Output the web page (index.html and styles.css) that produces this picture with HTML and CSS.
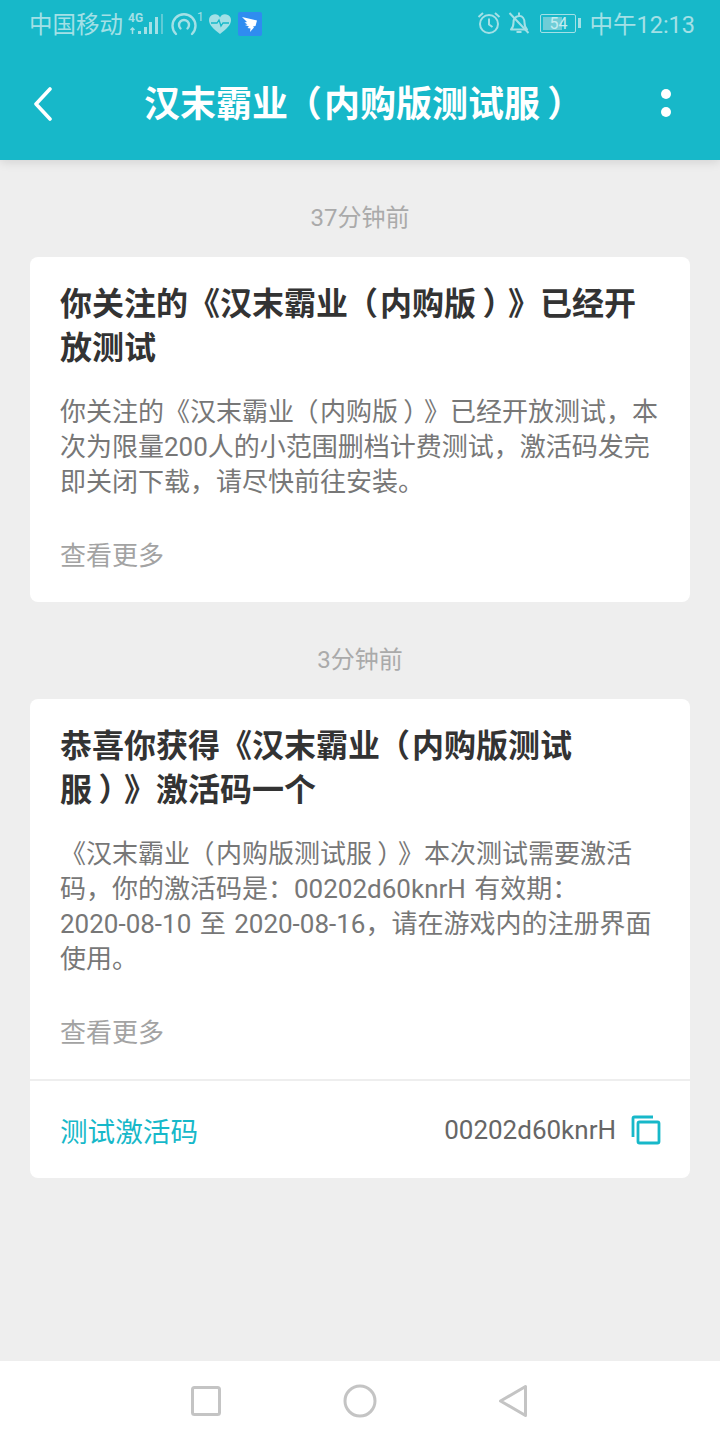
FILE: index.html
```html
<!DOCTYPE html>
<html>
<head lang="en">
    <meta charset="UTF-8">
    <title>汉末霸业（内购版测试服）</title>
    <link rel="stylesheet" href="styles.css">
</head>

<body>
<div class="page">
    <div class="top">
        <div class="status">
            <div class="status-left">
                <span class="carrier">中国移动</span>
                <span class="net">
                    <span class="net-text">4G</span>
                    <svg width="36" height="36" viewBox="0 0 36 36">
                        <path d="M4.500 23v6M2.500 25l2-2 2 2" fill="none" stroke="#a3e0e6" stroke-width="1.500"/>
                        <rect x="10" y="26" width="3" height="3" fill="#a3e0e6"/>
                        <rect x="16" y="22" width="3" height="7" fill="#a3e0e6"/>
                        <rect x="21" y="17" width="3" height="12" fill="#a3e0e6"/>
                        <rect x="27" y="12" width="3" height="17" fill="#a3e0e6"/>
                        <rect x="33" y="9" width="2" height="20" fill="#5fcbd6"/>
                    </svg>
                </span>
                <svg class="hotspot" width="26" height="26" viewBox="0 0 26 26">
                    <path d="M9.500 16.500a5 5 0 1 1 7 0" fill="none" stroke="#a3e0e6" stroke-width="2.400" stroke-linecap="round"/>
                    <path d="M5 22a11.500 11.500 0 1 1 16 0" fill="none" stroke="#a3e0e6" stroke-width="2.400" stroke-linecap="round"/>
                </svg>
                <span class="hotspot-num">1</span>
                <svg class="heart" width="24" height="22" viewBox="0 0 24 22">
                    <path d="M12 21C5 15.500 1 12 1 7a5.800 5.800 0 0 1 11-2.500A5.800 5.800 0 0 1 23 7c0 5-4 8.500-11 14z" fill="#a3e0e6"/>
                    <path d="M3 10h6l2-3 2 6 2-3h6" fill="none" stroke="#17b8c9" stroke-width="1.300"/>
                </svg>
                <svg class="ding" width="24" height="24" viewBox="0 0 24 24">
                    <rect width="24" height="24" rx="2" fill="#2f8cf0"/>
                    <path d="M4 5l15 3.500-1.500 5.500-2.500.5 1 1-4 4.500 .5-3.500-3-.5 1.500-1.500-4-1.500 2.500-.5-3-2 2.500-.5z" fill="#fff"/>
                </svg>
            </div>
            <div class="status-right">
                <svg width="24" height="24" viewBox="0 0 24 24">
                    <circle cx="12" cy="13" r="9" fill="none" stroke="#a3e0e6" stroke-width="2"/>
                    <path d="M12 7.500V13.500l3.500 2.500M1.500 6L6 2M22.500 6L18 2" fill="none" stroke="#a3e0e6" stroke-width="2"/>
                </svg>
                <svg class="bell" width="22" height="24" viewBox="0 0 22 24">
                    <path d="M3 18.500c2-2 2.500-4 2.500-7 0-3.500 2-6 5.500-6.500s5.500 3 5.500 6.500c0 3 .5 5 2.500 7z" fill="none" stroke="#a3e0e6" stroke-width="2" stroke-linejoin="round"/>
                    <path d="M11 1.500v3M8.500 21h5M1.500 2l19 20" fill="none" stroke="#a3e0e6" stroke-width="2"/>
                </svg>
                <span class="battery">
                    <span class="battery-body"><span class="battery-fill"></span><span class="battery-num">54</span></span>
                    <span class="battery-tip"></span>
                </span>
                <span class="clock">中午12:13</span>
            </div>
        </div>
        <div class="header">
            <svg class="back" width="20" height="34" viewBox="0 0 20 34">
                <path d="M17 2L3 17l14 15" fill="none" stroke="#fff" stroke-width="3.600" stroke-linecap="round" stroke-linejoin="round"/>
            </svg>
            <h1 class="title">汉末霸业<span class="po">（</span>内购版测试服<span class="pc">）</span></h1>
            <div class="more-menu"><i></i><i></i></div>
        </div>
    </div>

    <div class="main">
        <div class="time">37分钟前</div>
        <div class="card">
            <div class="card-body">
                <h2>你关注的《汉末霸业<span class="po">（</span>内购版<span class="pc">）</span>》已经开<br>放测试</h2>
                <p>你关注的《汉末霸业<span class="po">（</span>内购版<span class="pc">）</span>》已经开放测试，本<br>次为限量200人的小范围删档计费测试，激活码发完<br>即关闭下载，请尽快前往安装。</p>
                <div class="more">查看更多</div>
            </div>
        </div>

        <div class="time">3分钟前</div>
        <div class="card">
            <div class="card-body">
                <h2>恭喜你获得《汉末霸业<span class="po">（</span>内购版测试<br>服<span class="pc">）</span>》激活码一个</h2>
                <p>《汉末霸业<span class="po">（</span>内购版测试服<span class="pc">）</span>》本次测试需要激活<br>码，你的激活码是：00202d60knrH 有效期：<br>2020-08-10 至 2020-08-16，请在游戏内的注册界面<br>使用。</p>
                <div class="more">查看更多</div>
            </div>
            <div class="card-foot">
                <span class="code-label">测试激活码</span>
                <span class="code-wrap">
                    <span class="code">00202d60knrH</span>
                    <svg width="30" height="30" viewBox="0 0 30 30">
                        <path d="M2 22V3.500A1.500 1.500 0 0 1 3.500 2H22" fill="none" stroke="#17b8c9" stroke-width="2.800"/>
                        <rect x="7" y="7" width="21" height="21" rx="1.500" fill="none" stroke="#17b8c9" stroke-width="2.800"/>
                    </svg>
                </span>
            </div>
        </div>
    </div>

    <div class="nav">
        <svg width="30" height="30" viewBox="0 0 30 30">
            <rect x="1.500" y="1.500" width="27" height="27" rx="2" fill="none" stroke="#c4c4c4" stroke-width="3"/>
        </svg>
        <svg width="34" height="34" viewBox="0 0 34 34">
            <circle cx="17" cy="17" r="15" fill="none" stroke="#c4c4c4" stroke-width="3"/>
        </svg>
        <svg width="30" height="34" viewBox="0 0 30 34">
            <path d="M26.500 2.500V31.500L1.500 17z" fill="none" stroke="#c4c4c4" stroke-width="3" stroke-linejoin="round"/>
        </svg>
    </div>
</div>
</body>
</html>
```

FILE: styles.css
```css
*{
    margin: 0;
    padding: 0;
    box-sizing: border-box;
}
body{
    font-family: Roboto, "Noto Sans CJK SC", sans-serif;
    background: #eeeeee;
    text-spacing-trim: space-all;
    font-feature-settings: "chws" 0;
}
/* 括号在字框里居中 */
.po{
    letter-spacing: .06em;
    margin-left: -.06em;
}
.pc{
    letter-spacing: -.2em;
    margin-left: .2em;
}
.page{
    width: 720px;
    height: 1440px;
    display: flex;
    flex-direction: column;
}

/* top */
.top{
    background: #17b8c9;
    height: 160px;
    box-shadow: 0 2px 10px rgba(0,0,0,.12);
    position: relative;
}
.status{
    height: 50px;
    padding: 0 25px 4px 29px;
    display: flex;
    justify-content: space-between;
    align-items: center;
    color: #a3e0e6;
}
.status-left,.status-right{
    display: flex;
    align-items: center;
}
.carrier{
    font-size: 23.500px;
    width: 99px;
}
.net{
    width: 36px;
    height: 36px;
    position: relative;
    display: block;
}
.net svg{
    display: block;
}
.net-text{
    position: absolute;
    left: 0;
    top: 6px;
    font-size: 12px;
    line-height: 14px;
    font-weight: 700;
}
.hotspot{
    margin: 3px 0 0 7px;
}
.hotspot-num{
    font-size: 12px;
    line-height: 14px;
    align-self: flex-start;
    margin-top: 5px;
    width: 8px;
}
.heart{
    margin: 1px 0 0 3px;
}
.ding{
    margin: 2px 0 0 6px;
}
.bell{
    margin-left: 7px;
}
.battery{
    display: flex;
    align-items: center;
    margin-left: 10px;
}
.battery-body{
    width: 36px;
    height: 19px;
    border: 1px solid #a3e0e6;
    border-radius: 2px;
    position: relative;
    display: block;
}
.battery-fill{
    position: absolute;
    left: 2px;
    top: 2px;
    bottom: 2px;
    width: 19px;
    background: #6fcdd7;
}
.battery-num{
    position: absolute;
    left: 8px;
    top: 0;
    font-size: 16px;
    line-height: 17px;
    color: #c5ecf0;
}
.battery-tip{
    width: 3px;
    height: 10px;
    margin-left: 2px;
    background: #a3e0e6;
}
.clock{
    font-size: 23.500px;
    margin-left: 8px;
}
.header{
    height: 110px;
    padding: 0 49px 4px 33px;
    display: flex;
    align-items: center;
}
.back{
    flex: none;
    margin: 2px 6px 0 0;
}
.title{
    flex: 1;
    font-size: 36px;
    font-weight: 700;
    line-height: 50px;
    padding-top: 4px;
    color: #fff;
    text-align: center;
    white-space: nowrap;
}
.more-menu{
    width: 10px;
    flex: none;
    display: flex;
    flex-direction: column;
    gap: 8px;
}
.more-menu i{
    display: block;
    width: 10px;
    height: 10px;
    border-radius: 50%;
    background: #fff;
}

/* list */
.main{
    flex: 1;
    padding: 0 30px;
}
.time{
    height: 97px;
    padding-top: 41px;
    font-size: 24px;
    line-height: 34px;
    color: #aaaaaa;
    text-align: center;
}
.card{
    background: #fff;
    border-radius: 8px;
}
.card-body{
    padding: 25px 30px 28px;
}
.card h2{
    font-size: 32px;
    font-weight: 700;
    line-height: 44px;
    color: #333333;
}
.card p{
    margin-top: 25px;
    font-size: 26px;
    line-height: 35px;
    color: #777777;
    word-spacing: 2px;
}
.more{
    margin-top: 39px;
    font-size: 26px;
    line-height: 35px;
    color: #a3a3a3;
}
.card-foot{
    height: 99px;
    border-top: 2px solid #eeeeee;
    padding: 0 29px 0 30px;
    display: flex;
    justify-content: space-between;
    align-items: center;
}
.code-label{
    font-size: 27.600px;
    color: #17b8c9;
}
.code-wrap{
    display: flex;
    align-items: center;
    gap: 15px;
}
.code{
    font-size: 26px;
    color: #666666;
}
.code-wrap svg{
    display: block;
}

/* bottom nav */
.nav{
    height: 79px;
    background: #fff;
    display: flex;
    align-items: center;
    justify-content: center;
    gap: 122px;
}
```
